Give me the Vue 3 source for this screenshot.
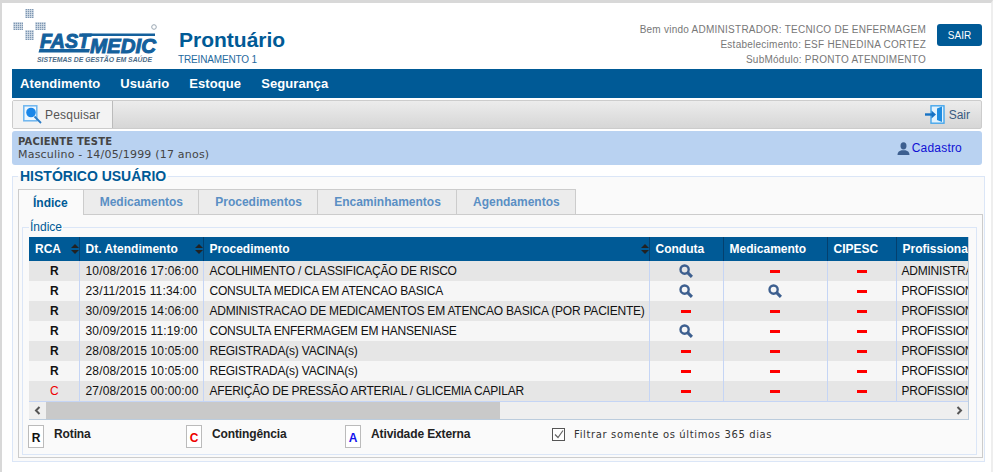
<script setup>
const cols = [
  { name: 'RCA', w: 50, sort: true },
  { name: 'Dt. Atendimento', w: 124, sort: true },
  { name: 'Procedimento', w: 446, sort: true },
  { name: 'Conduta', w: 74 },
  { name: 'Medicamento', w: 104 },
  { name: 'CIPESC', w: 69 },
  { name: 'Profissional', w: 110 }
]
const rows = [
  ['R', '10/08/2016 17:06:00', 'ACOLHIMENTO / CLASSIFICAÇÃO DE RISCO', 1, 0, 'ADMINISTRADOR'],
  ['R', '23/11/2015 11:34:00', 'CONSULTA MEDICA EM ATENCAO BASICA', 1, 1, 'PROFISSIONAL'],
  ['R', '30/09/2015 14:06:00', 'ADMINISTRACAO DE MEDICAMENTOS EM ATENCAO BASICA (POR PACIENTE)', 0, 0, 'PROFISSIONAL'],
  ['R', '30/09/2015 11:19:00', 'CONSULTA ENFERMAGEM EM HANSENIASE', 1, 0, 'PROFISSIONAL'],
  ['R', '28/08/2015 10:05:00', 'REGISTRADA(s) VACINA(s)', 0, 0, 'PROFISSIONAL'],
  ['R', '28/08/2015 10:05:00', 'REGISTRADA(s) VACINA(s)', 0, 0, 'PROFISSIONAL'],
  ['C', '27/08/2015 00:00:00', 'AFERIÇÃO DE PRESSÃO ARTERIAL / GLICEMIA CAPILAR', 0, 0, 'PROFISSIONAL']
]
const tabs = ['Índice', 'Medicamentos', 'Procedimentos', 'Encaminhamentos', 'Agendamentos']
const menu = ['Atendimento', 'Usuário', 'Estoque', 'Segurança']
</script>

<template>
  <div class="page">
    <div class="wrap">
      <header class="head">
        <div class="logo">
          <svg width="146" height="57" viewBox="0 0 146 57">
            <defs>
              <pattern id="dots" width="2" height="2" patternUnits="userSpaceOnUse">
                <rect width="2" height="2" fill="#dfe6ee" />
                <rect width="1.300" height="1.300" fill="#7e97b2" />
              </pattern>
            </defs>
            <rect x="13" y="0" width="9" height="9" fill="url(#dots)" />
            <rect x="1" y="13" width="10" height="8" fill="url(#dots)" />
            <rect x="23" y="13" width="11" height="8" fill="url(#dots)" />
            <rect x="13" y="21" width="9" height="10" fill="url(#dots)" />
            <circle cx="142" cy="18" r="2.300" fill="none" stroke="#9aa7b3" stroke-width="1" />
            <path d="M70 24.500H143V27H69.500z" fill="#14609c" />
            <path d="M27.500 40H78L77 43.500H26.500z" fill="#14609c" />
            <text x="28" y="39" class="logo-main fast" textLength="50" lengthAdjust="spacingAndGlyphs">FAST</text>
            <text x="78" y="44" class="logo-main medic" textLength="66" lengthAdjust="spacingAndGlyphs">MEDIC</text>
            <text x="25" y="53" class="logo-sub" textLength="115" lengthAdjust="spacingAndGlyphs">SISTEMAS DE GESTÃO EM SAÚDE</text>
          </svg>
        </div>
        <div class="title">
          <div class="title-main">Prontuário</div>
          <div class="title-sub">TREINAMENTO 1</div>
        </div>
        <div class="welcome">
          <div>Bem vindo ADMINISTRADOR: TECNICO DE ENFERMAGEM</div>
          <div>Estabelecimento: ESF HENEDINA CORTEZ</div>
          <div>SubMódulo: PRONTO ATENDIMENTO</div>
        </div>
        <button class="exit">SAIR</button>
      </header>

      <nav class="menu">
        <span v-for="m in menu" :key="m">{{ m }}</span>
      </nav>

      <div class="toolbar">
        <div class="search-btn">
          <svg width="19" height="19" viewBox="0 0 19 19">
            <rect x=".8" y=".8" width="13" height="15" fill="#eef7fe" stroke="#6db5ef" stroke-width="1.500" />
            <circle cx="8" cy="7.500" r="4.800" fill="#1a86e8" />
            <path d="M11.500 11.500l6.500 6.500" stroke="#2a7cc8" stroke-width="1.800" />
          </svg>
          <span>Pesquisar</span>
        </div>
        <div class="sair">
          <svg width="20" height="19" viewBox="0 0 20 19">
            <rect x="6" y=".8" width="13" height="17.400" fill="#e2f2fd" stroke="#45a6ec" stroke-width="1.400" />
            <path d="M12 3.500l5-2v15.500l-5-2z" fill="#1f8ce0" />
            <path d="M0 9.500h8" stroke="#1672c4" stroke-width="2.400" />
            <path d="M6.500 5.500l4.500 4-4.500 4z" fill="#1672c4" />
          </svg>
          <span>Sair</span>
        </div>
      </div>

      <section class="patient">
        <div>
          <div class="p-name">PACIENTE TESTE</div>
          <div class="p-info">Masculino - 14/05/1999 (17 anos)</div>
        </div>
        <div class="cadastro">
          <svg width="13" height="13" viewBox="0 0 13 13">
            <ellipse cx="6.500" cy="3.800" rx="3" ry="3.600" fill="#3d5f8f" />
            <path d="M0.500 13c0-3 1.500-4 4-4.800h4c2.500.8 4 1.800 4 4.800z" fill="#3d5f8f" />
          </svg>
          <span>Cadastro</span>
        </div>
      </section>

      <fieldset class="history">
        <legend>HISTÓRICO USUÁRIO</legend>
        <div class="tabs">
          <div v-for="(t, i) in tabs" :key="t" class="tab" :class="{ active: i === 0 }">{{ t }}</div>
        </div>
        <div class="tab-body">
          <fieldset class="inner">
            <legend>Índice</legend>
            <div class="table-box">
              <div class="table-clip">
                <table>
                  <colgroup>
                    <col v-for="c in cols" :key="c.name" :style="{ width: c.w + 'px' }" />
                  </colgroup>
                  <thead>
                    <tr>
                      <th v-for="c in cols" :key="c.name">
                        <span>{{ c.name }}</span>
                        <i v-if="c.sort" class="sort"></i>
                      </th>
                    </tr>
                  </thead>
                  <tbody>
                    <tr v-for="(r, i) in rows" :key="i">
                      <td class="rca" :class="{ red: r[0] === 'C' }">{{ r[0] }}</td>
                      <td class="date">{{ r[1] }}</td>
                      <td class="proc">{{ r[2] }}</td>
                      <td class="c">
                        <svg v-if="r[3]" class="mag" viewBox="0 0 13 13"><circle cx="5.200" cy="5.200" r="3.800" fill="none" stroke="#3d5f8f" stroke-width="2.200" /><path d="M8 8l4 4" stroke="#3d5f8f" stroke-width="2.800" /></svg>
                        <b v-else class="dash"></b>
                      </td>
                      <td class="c">
                        <svg v-if="r[4]" class="mag" viewBox="0 0 13 13"><circle cx="5.200" cy="5.200" r="3.800" fill="none" stroke="#3d5f8f" stroke-width="2.200" /><path d="M8 8l4 4" stroke="#3d5f8f" stroke-width="2.800" /></svg>
                        <b v-else class="dash"></b>
                      </td>
                      <td class="c"><b class="dash"></b></td>
                      <td class="prof">{{ r[5] }}</td>
                    </tr>
                  </tbody>
                </table>
              </div>
              <div class="scrollbar">
                <span class="arrow"><svg width="7" height="9" viewBox="0 0 7 9"><path d="M5.500 1L2 4.500 5.500 8" fill="none" stroke="#555" stroke-width="2" /></svg></span>
                <div class="track"><div class="thumb"></div></div>
                <span class="arrow"><svg width="7" height="9" viewBox="0 0 7 9"><path d="M1.500 1L5 4.500 1.500 8" fill="none" stroke="#555" stroke-width="2" /></svg></span>
              </div>
            </div>
            <div class="legend-row">
              <div class="key"><span class="box">R</span><strong>Rotina</strong></div>
              <div class="key k2"><span class="box red">C</span><strong>Contingência</strong></div>
              <div class="key k3"><span class="box blue">A</span><strong>Atividade Externa</strong></div>
              <label class="filter">
                <svg width="14" height="14" viewBox="0 0 14 14"><rect x=".5" y=".5" width="12" height="12" fill="#fff" stroke="#555" /><path d="M3 6.500l3 3 5-7" fill="none" stroke="#666" stroke-width="1.200" /></svg>
                <span>Filtrar somente os últimos 365 dias</span>
              </label>
            </div>
          </fieldset>
        </div>
      </fieldset>
    </div>
  </div>
</template>

<style>
html, body { margin: 0; padding: 0; background: #fff; }
</style>

<style scoped>
.page {
  width: 993px;
  height: 472px;
  box-sizing: border-box;
  border-top: 3px solid #d8d8d8;
  border-left: 2px solid #d8d8d8;
  border-right: 2px solid #eeeeee;
  overflow: hidden;
  font-family: "Liberation Sans", Arial, sans-serif;
  background: #fff;
}
.wrap { width: 970px; margin-left: 10px; }
.head { height: 66px; display: flex; position: relative; }
.logo { width: 167px; padding-top: 6px; box-sizing: border-box; }
.logo svg { display: block; overflow: visible; }
.logo-main { font-family: "Liberation Sans", sans-serif; font-style: italic; font-weight: 700; fill: #14609c; stroke: #14609c; stroke-width: 1px; }
.fast { font-size: 19.5px; }
.medic { font-size: 21px; }
.logo-sub { font: italic 700 6.5px "Liberation Sans", sans-serif; fill: #4a6a86; }
.title { padding-top: 24px; }
.title-main { font-size: 21px; font-weight: 700; line-height: 25px; color: #005a96; }
.title-sub { font-size: 10px; line-height: 12px; margin: 2px 0 0 -1px; letter-spacing: -.15px; color: #1f6a9e; }
.welcome {
  margin-left: auto;
  padding-top: 19px;
  font-size: 10px;
  line-height: 15px;
  letter-spacing: .25px;
  color: #777;
  text-align: right;
}
.exit {
  width: 45px;
  height: 22px;
  margin: 21px 0 0 11px;
  padding: 0;
  border: 0;
  border-radius: 3px;
  background: #005a96;
  color: #fff;
  font: 10px "Liberation Sans", sans-serif;
}
.menu {
  height: 29px;
  background: #005a96;
  display: flex;
  gap: 20px;
  padding-left: 8px;
  align-items: center;
  color: #fff;
  font-size: 13px;
  font-weight: 700;
  letter-spacing: .08px;
}
.toolbar {
  height: 29px;
  box-sizing: border-box;
  margin-top: 2px;
  border: 1px solid #ccc;
  border-radius: 2px;
  display: flex;
  justify-content: space-between;
  align-items: stretch;
  background: linear-gradient(#ececec, #d6d6d6);
  font-size: 12px;
  color: #555;
}
.search-btn {
  width: 100px;
  box-sizing: border-box;
  background: #f3f3f3;
  border-right: 1px solid #bbb;
  display: flex;
  align-items: center;
  gap: 3px;
  padding-left: 10px;
  letter-spacing: .2px;
}
.sair { display: flex; align-items: center; gap: 4px; padding-right: 11px; color: #3a5a80; }
.patient {
  height: 34px;
  margin-top: 2px;
  border-radius: 3px;
  background: #b9d2f1;
  display: flex;
  justify-content: space-between;
  align-items: center;
  padding: 0 20px 0 6px;
  box-sizing: border-box;
  font-family: "DejaVu Sans", Verdana, sans-serif;
  color: #444;
}
.p-name { font-size: 10px; font-weight: 700; line-height: 13px; letter-spacing: .15px; }
.p-info { font-size: 11px; line-height: 13px; letter-spacing: .2px; }
.cadastro {
  display: flex;
  align-items: center;
  gap: 2px;
  font: 12px "Liberation Sans", sans-serif;
  letter-spacing: .2px;
  color: #1010d4;
}
.history {
  margin: 3px 0 0;
  padding: 5px 1px 3px 5px;
  width: 973px;
  height: 294px;
  box-sizing: border-box;
  border: 1px solid #dbe6f7;
  min-width: 0;
  background: #fafafa;
}
.history > legend {
  padding: 0 2px;
  font-size: 14px;
  font-weight: 700;
  line-height: 16px;
  color: #005a96;
}
.tabs { display: flex; height: 25px; }
.tab {
  box-sizing: border-box;
  height: 25px;
  padding: 0 15.2px 0 16px;
  display: flex;
  align-items: center;
  background: #ececec;
  border: 1px solid #ccc;
  border-left: 0;
  border-bottom: 0;
  font-size: 12px;
  font-weight: 700;
  color: #5a8fc4;
}
.tab.active {
  padding: 0 15px 0 14px;
  background: #fafafa;
  border-left: 1px solid #ccc;
  color: #005a96;
  position: relative;
  z-index: 1;
  height: 26px;
}
.tab-body {
  box-sizing: border-box;
  height: 244px;
  border: 1px solid #ccc;
  background: #fafafa;
  padding: 5px 5px 0 3px;
}
.inner {
  margin: 0;
  padding: 0 6px 5px;
  height: 235px;
  box-sizing: border-box;
  border: 1px solid #dbe6f7;
  min-width: 0;
}
.inner > legend {
  padding: 0 1px;
  font-size: 12px;
  line-height: 14px;
  color: #005a96;
}
.table-box {
  width: 940px;
  margin-top: 3px;
  border-right: 1px solid #bcd;
  border-bottom: 1px solid #bcd;
  box-sizing: border-box;
}
.table-clip { overflow: hidden; }
table {
  width: 977px;
  table-layout: fixed;
  border-collapse: collapse;
  font-size: 12px;
  color: #111;
}
th {
  height: 24px;
  padding: 0 6px;
  box-sizing: border-box;
  background: #005a96;
  color: #fff;
  text-align: left;
  font-size: 12px;
  border-right: 1px solid #04406e;
  position: relative;
  white-space: nowrap;
}
.sort {
  position: absolute;
  right: 0;
  top: 7px;
  width: 0;
  height: 0;
  border-left: 4px solid transparent;
  border-right: 4px solid transparent;
  border-bottom: 4px solid #222;
}
.sort::after {
  content: "";
  position: absolute;
  left: -4px;
  top: 6px;
  border-left: 4px solid transparent;
  border-right: 4px solid transparent;
  border-top: 4px solid #222;
}
td {
  height: 20px;
  padding: 0 5px 0 6px;
  box-sizing: border-box;
  border-right: 1px solid #c5d5f5;
  white-space: nowrap;
  overflow: hidden;
}
.date { letter-spacing: .15px; }
.proc { letter-spacing: -.22px; }
.prof { letter-spacing: -.22px; padding-left: 5px; }
tbody tr:nth-child(odd) td { background: #e6e6e6; }
tbody tr:nth-child(even) td { background: #f6f6f6; }
tbody tr:last-child td { border-bottom: 1px solid #c5d5f5; }
.rca { text-align: center; font-weight: 700; }
.rca.red { color: #e00; font-weight: 400; }
.c { text-align: center; padding: 0; }
.mag { width: 14px; height: 14px; display: inline-block; vertical-align: middle; }
.dash { display: inline-block; width: 10px; height: 3px; background: #f00; vertical-align: middle; }
.scrollbar {
  height: 17px;
  display: flex;
  align-items: stretch;
  background: #efefef;
}
.arrow {
  width: 17px;
  display: flex;
  align-items: center;
  justify-content: center;
}
.track { flex: 1; }
.thumb { width: 454px; height: 100%; background: #c9c9c9; }
.legend-row {
  display: flex;
  align-items: flex-start;
  margin: 5px 0 0 -1px;
  font-size: 12px;
  color: #222;
}
.key { display: flex; gap: 10px; width: 158px; }
.k2 { width: 159px; }
.k3 { width: 207px; }
.key strong { line-height: 14px; margin-top: 2px; letter-spacing: -.12px; }
.box {
  width: 16px;
  height: 23px;
  box-sizing: border-box;
  border: 1px solid #bbb;
  text-align: center;
  font-weight: 700;
  line-height: 24px;
  background: #fff;
  font-size: 12px;
  color: #111;
}
.box.red { color: #e00; }
.box.blue { color: #11e; }
.filter {
  display: flex;
  align-items: center;
  gap: 8px;
  font: 10px "DejaVu Sans", Verdana, sans-serif;
  letter-spacing: .63px;
  color: #333;
  margin-top: 3px;
}
</style>
